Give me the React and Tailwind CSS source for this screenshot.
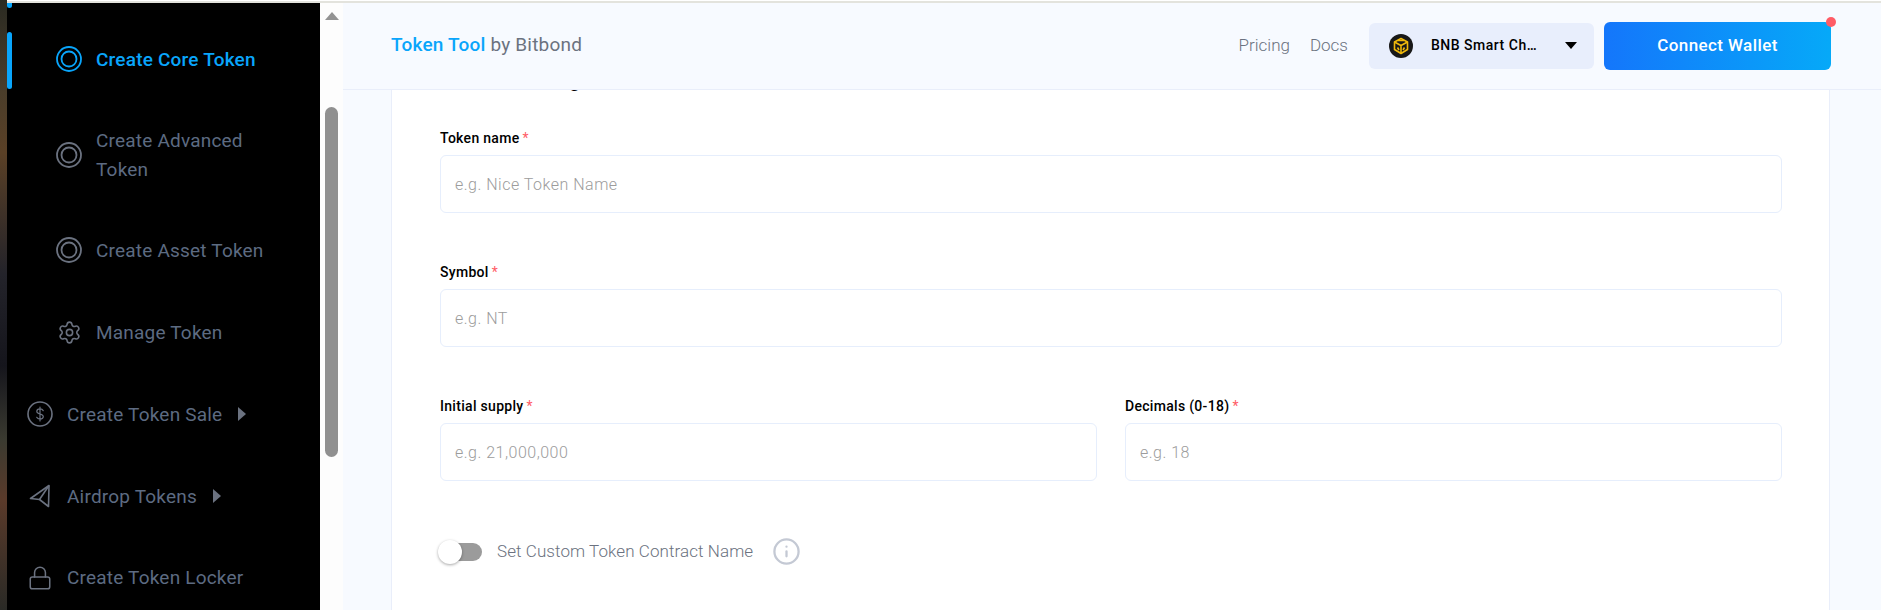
import React from 'react';
import { Settings, Lock, Info } from 'lucide-react';

const ringIcon = (color) => (
  <svg width="26" height="26" viewBox="0 0 26 26" fill="none" stroke={color} strokeWidth="1.8">
    <circle cx="13" cy="13" r="12" />
    <circle cx="13" cy="13" r="7.500" />
  </svg>
);

const dollarIcon = (
  <svg width="26" height="26" viewBox="0 0 26 26" fill="none" stroke="#6b7280" strokeWidth="1.6" strokeLinecap="round">
    <circle cx="13" cy="13" r="12" />
    <path d="M16.200 9.600c-.6-1.100-1.800-1.700-3.200-1.700-1.800 0-3.200 1-3.200 2.500 0 3.300 6.500 1.900 6.500 5.200 0 1.500-1.500 2.500-3.300 2.500-1.500 0-2.700-.6-3.300-1.800M13 6v14" strokeWidth="1.200" />
  </svg>
);

const planeIcon = (
  <svg width="22" height="24" viewBox="0 0 22 24" fill="none" stroke="#6b7280" strokeWidth="1.6" strokeLinejoin="round">
    <path d="M20 1.500 1.500 14.500 10.500 15.500 19.500 22.500Z" />
    <path d="M20 1.500 10.500 15.500" />
  </svg>
);

const NAV = [
  { label: 'Create Core Token', icon: ringIcon('#09a5fb'), active: true, indent: true, h: 'h-[82px]' },
  { label: 'Create Advanced Token', icon: ringIcon('#6b7280'), indent: true, h: 'h-[109px]' },
  { label: 'Create Asset Token', icon: ringIcon('#6b7280'), indent: true, h: 'h-[82px]' },
  { label: 'Manage Token', icon: <Settings size={25} strokeWidth={1.5} color="#6b7280" />, indent: true, h: 'h-[82px]' },
  { label: 'Create Token Sale', icon: dollarIcon, arrow: true, h: 'h-[82px]' },
  { label: 'Airdrop Tokens', icon: planeIcon, arrow: true, h: 'h-[82px]' },
  { label: 'Create Token Locker', icon: <Lock size={28} strokeWidth={1.4} color="#6b7280" />, h: 'h-[81px]' },
];

function NavItem({ item }) {
  return (
    <div className={`flex items-center ${item.h} ${item.indent ? 'pl-[49px]' : 'pl-[20px]'}`}>
      <span className="flex w-[26px] shrink-0 justify-center">{item.icon}</span>
      <span
        className={`ml-[14px] text-[19px] leading-[29px] tracking-[0.2px] ${
          item.indent ? 'w-[180px]' : ''
        } ${item.active ? 'font-medium text-[#09a5fb]' : 'text-[#5d6b82]'}`}
      >
        {item.label}
      </span>
      {item.arrow && (
        <span className="ml-[16px] h-0 w-0 border-y-[7px] border-l-[8px] border-y-transparent border-l-[#6b7280]" />
      )}
    </div>
  );
}

function Field({ label, placeholder }) {
  return (
    <div className="flex-1">
      <label className="mb-[7px] flex h-[19px] items-center text-[14px] font-medium tracking-[0.3px] text-black">
        {label}
        <span className="ml-[3px] font-normal text-[#ff5c66]">*</span>
      </label>
      <input
        placeholder={placeholder}
        className="h-[58px] w-full rounded-[6px] border border-[#e6eefc] bg-white px-[14px] text-[16px] font-light tracking-[0.5px] outline-none placeholder:text-[#9c9c9c]"
      />
    </div>
  );
}

export default function App() {
  return (
    <div className="flex h-[610px] w-[1881px] overflow-hidden bg-white font-['Roboto',sans-serif]">
      {/* desktop wallpaper peeking out on the left */}
      <div className="w-[7px] shrink-0 bg-[linear-gradient(180deg,#2a2a22_0%,#4a3d2a_15%,#5a4026_25%,#23232a_45%,#15151c_60%,#3a3a30_72%,#5a3a2a_82%,#2a2a26_100%)]" />

      <div className="flex min-w-0 flex-1 flex-col">
        <div className="h-[3px] shrink-0 border-t border-white bg-[#e3e3dd]" />

        <div className="flex min-h-0 flex-1">
          {/* sidebar */}
          <aside className="relative w-[313px] shrink-0 bg-black pt-[15px]">
            <span className="absolute left-0 top-0 h-[5px] w-[5px] rounded-b-full bg-[#09a5fb]" />
            <span className="absolute left-0 top-[29px] h-[57px] w-[5px] rounded-full bg-[#09a5fb]" />
            {NAV.map((item) => (
              <NavItem key={item.label} item={item} />
            ))}
          </aside>

          {/* scrollbar */}
          <div className="flex w-[23px] shrink-0 flex-col items-center bg-[#fdfdfd] pt-[9px]">
            <span className="h-0 w-0 border-x-[7.500px] border-b-[8px] border-x-transparent border-b-[#939393]" />
            <span className="mt-[87px] h-[350px] w-[13px] rounded-full bg-[#909090]" />
          </div>

          {/* main */}
          <main className="min-w-0 flex-1 bg-[#f7faff]">
            <header className="relative z-10 flex h-[87px] items-center border-b border-[#e9eefa] bg-[#f7faff] pb-[1px] pl-[48px] pr-[50px]">
              <div className="text-[19px] tracking-[0.2px] text-[#6b7280]">
                <span className="font-medium text-[#09a5fb]">Token Tool</span> by Bitbond
              </div>
              <nav className="ml-auto flex items-center gap-[20px] text-[17px] font-light text-[#6b7280]">
                <span>Pricing</span>
                <span>Docs</span>
              </nav>
              <div className="ml-[21px] flex h-[46px] w-[225px] items-center rounded-[6px] bg-[#e8eefc] pl-[20px]">
                <svg width="24" height="24" viewBox="0 0 24 24" fill="none" stroke="#f0b90b" strokeWidth="1.600" strokeLinejoin="round">
                  <circle cx="12" cy="12" r="12" fill="#181818" stroke="none" />
                  <path d="M12 4.500 18.500 8v7.500L12 19.500 5.500 15.500V8Z" />
                  <path d="M5.500 8 12 11.500 18.500 8M12 11.500v8M9 6.500 15 6.500M8.500 13.500l1.500 2.500M15.500 13.500 14 16" />
                </svg>
                <span className="ml-[18px] w-[107px] truncate text-[14px] font-medium tracking-[0.5px] text-black">BNB Smart Chain</span>
                <span className="ml-[27px] h-0 w-0 border-x-[6px] border-t-[7px] border-x-transparent border-t-black" />
              </div>
              <button className="relative ml-[10px] h-[48px] w-[227px] rounded-[6px] bg-[linear-gradient(90deg,#1476fb,#06a9f8)] text-[17px] font-medium tracking-[0.4px] text-white">
                Connect Wallet
                <span className="absolute -right-[5px] -top-[5px] h-[10px] w-[10px] rounded-full bg-[#ff5c66]" />
              </button>
            </header>

            {/* form card, scrolled so its heading slips under the header */}
            <section className="ml-[48px] mr-[51px] -mt-[4px] h-[540px] border-x border-[#e9eefa] bg-white pl-[48px] pr-[47px]">
              <h2 className="h-[26px] -translate-y-[20px] text-[23px] font-medium leading-[26px] text-black">Token Settings</h2>
              <div className="flex flex-col gap-[50px] pt-[17px]">
                <Field label="Token name" placeholder="e.g. Nice Token Name" />
                <Field label="Symbol" placeholder="e.g. NT" />
                <div className="flex gap-[28px]">
                  <Field label="Initial supply" placeholder="e.g. 21,000,000" />
                  <Field label="Decimals (0-18)" placeholder="e.g. 18" />
                </div>
              </div>
              <div className="mt-[56px] flex items-center">
                <span className="relative h-[18px] w-[42px] rounded-full bg-[#9b9b9b]">
                  <span className="absolute -left-[2px] -top-[3px] h-[24px] w-[24px] rounded-full bg-white shadow-[0_1px_3px_rgba(0,0,0,0.35)]" />
                </span>
                <span className="ml-[15px] text-[17px] font-light tracking-[0.08px] text-[#6b7280]">Set Custom Token Contract Name</span>
                <Info size={29} strokeWidth={1.900} color="#c4c9d4" className="ml-[19px]" />
              </div>
            </section>
          </main>
        </div>
      </div>
    </div>
  );
}
